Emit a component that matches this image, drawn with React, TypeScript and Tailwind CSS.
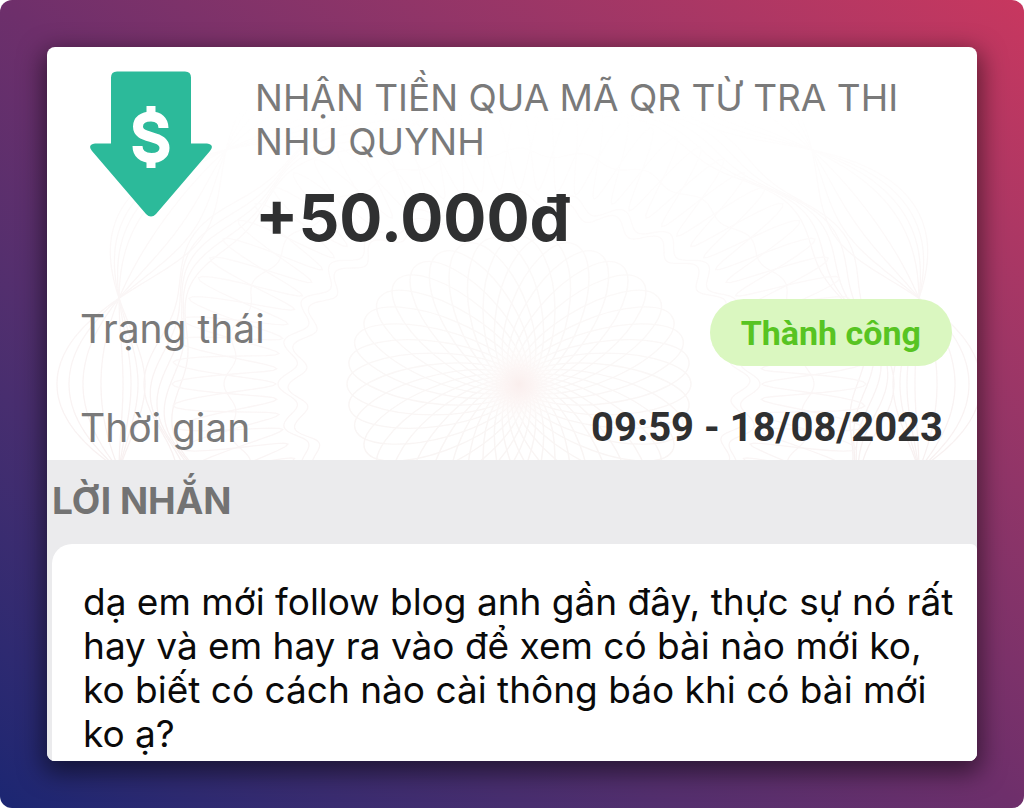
const CENTER_X = 472;
const CENTER_Y = 337;

type Lobes = { radius: number; amplitude: number; lobes: number; phase: number };

/** Closed wavy ring drawn in polar coordinates around the ornament's centre. */
function ringPath({ radius, amplitude, lobes, phase }: Lobes): string {
  const steps = 720;
  const points: string[] = [];
  for (let i = 0; i < steps; i++) {
    const t = (i / steps) * Math.PI * 2;
    const r = radius + amplitude * Math.cos(lobes * t + phase);
    points.push(`${(CENTER_X - r * Math.cos(t)).toFixed(1)} ${(CENTER_Y - r * 0.8 * Math.sin(t)).toFixed(1)}`);
  }
  return `M${points.join("L")}Z`;
}

const petals = Array.from({ length: 40 }, (_, i) => i * 9);

const outerStrands: Lobes[] = [
  ...[48, 36, 22, 4, -18, -26, -33, -40].map((amplitude) => ({ radius: 414, amplitude, lobes: 6, phase: 0 })),
  ...[0, 1, 2, 3, 4].map((i) => ({ radius: 366 - i * 6, amplitude: 9, lobes: 12, phase: i * 0.5 })),
];

const innerStrands: Lobes[] = [
  { radius: 290, amplitude: 5, lobes: 28, phase: 0 },
  { radius: 232, amplitude: 9, lobes: 28, phase: 0 },
  { radius: 222, amplitude: 9, lobes: 28, phase: 0.5 },
  { radius: 295, amplitude: 52, lobes: 40, phase: 0 },
  { radius: 295, amplitude: 52, lobes: 40, phase: 3.14 },
];

function Guilloche() {
  return (
    <svg
      aria-hidden="true"
      className="absolute inset-0 h-full w-full"
      viewBox="0 0 930 413"
      preserveAspectRatio="xMidYMax slice"
      fill="none"
    >
      <defs>
        <linearGradient id="fade" x1="0" y1="0" x2="0" y2="1">
          <stop offset="0.15" stopColor="#fff" stopOpacity="0" />
          <stop offset="0.55" stopColor="#fff" stopOpacity="0.6" />
          <stop offset="1" stopColor="#fff" />
        </linearGradient>
        <mask id="fadeMask" maskUnits="userSpaceOnUse" x="0" y="0" width="930" height="413">
          <rect width="930" height="413" fill="url(#fade)" />
        </mask>
        <radialGradient id="glow">
          <stop offset="0" stopColor="#f9ebea" />
          <stop offset="0.35" stopColor="#fcf3f2" stopOpacity="0.8" />
          <stop offset="1" stopColor="#fff" stopOpacity="0" />
        </radialGradient>
      </defs>
      <g mask="url(#fadeMask)">
        <g
          stroke="#f9f5f4"
          strokeWidth="1.5"
          transform={`translate(${CENTER_X} ${CENTER_Y}) scale(1 0.86)`}
        >
          {petals.map((angle) => (
            <ellipse key={angle} cx="86" cy="0" rx="86" ry="36" transform={`rotate(${angle})`} />
          ))}
        </g>
        <g stroke="#f8f1f1" strokeWidth="1.3">
          {outerStrands.map((strand, i) => (
            <path key={i} d={ringPath(strand)} />
          ))}
        </g>
        <g stroke="#faf5f5" strokeWidth="1.3">
          {innerStrands.map((strand, i) => (
            <path key={i} d={ringPath(strand)} />
          ))}
        </g>
        <circle cx={CENTER_X} cy={CENTER_Y} r="46" fill="url(#glow)" />
      </g>
    </svg>
  );
}

function ReceiveIcon() {
  return (
    <svg aria-hidden="true" className="h-[146px] w-[122px] shrink-0" viewBox="0 0 122 146">
      <path
        d="M27 0.500H95Q101 0.500 101 6.500V72.500H117Q125 74 120 80L66 143Q61 148 56 143L2 80Q-3 74 5 72.500H21V6.500Q21 0.500 27 0.500Z"
        fill="#2cba9a"
      />
      <g fill="none" stroke="#fff">
        <path d="M61 35V44M61 88V97" strokeWidth="9" />
        <path
          d="M73.500 57C73.500 49.500 68.500 45.500 61 45.500C53 45.500 48 49.500 48 55.500C48 61.500 52.500 63.500 61 66C70 68.500 74.500 71 74.500 77C74.500 83.500 69 87 61.500 87C52.500 87 47.500 82.500 47.500 75"
          strokeWidth="10"
        />
      </g>
    </svg>
  );
}

export default function App() {
  return (
    <main className="min-h-screen rounded-xl bg-linear-to-tr from-[#1b2672] via-[#6e2f6b] to-[#c8375f] p-[47px] font-['Inter','Noto_Sans',sans-serif]">
      <article className="overflow-hidden rounded-lg bg-white shadow-[0_8px_24px_4px_rgba(0,0,0,0.5)]">
        <section className="relative pb-2">
          <Guilloche />
          <div className="relative">
            <header className="flex gap-[43px] pt-6 pl-[43px]">
              <ReceiveIcon />
              <div className="pt-[5px]">
                <h1 className="max-w-[660px] text-[37px] leading-[44px] font-normal text-[#7a7a7a]">
                  NHẬN TIỀN QUA MÃ QR TỪ TRA THI NHU QUYNH
                </h1>
                <p className="mt-4 text-[64px] leading-[76px] font-bold text-[#2f3031]">+50.000đ</p>
              </div>
            </header>
            <dl className="pt-[43px] pr-[25px] pl-[33px]">
              <div className="flex items-start justify-between">
                <dt className="pt-[6px] text-[39px] leading-[48px] font-normal text-[#7a7a7a]">Trạng thái</dt>
                <dd className="rounded-full bg-[#daf7c0] px-[31px] pt-[13px] pb-[11px] font-[Roboto,sans-serif] text-[34px] leading-[43px] font-bold text-[#57c422]">
                  Thành công
                </dd>
              </div>
              <div className="mt-[38px] flex items-center justify-between pr-[9px]">
                <dt className="text-[39px] leading-[48px] font-normal text-[#7a7a7a]">Thời gian</dt>
                <dd className="font-[Roboto,sans-serif] text-[40px] leading-[48px] font-bold text-[#2f3031]">
                  <time dateTime="2023-08-18T09:59">09:59 - 18/08/2023</time>
                </dd>
              </div>
            </dl>
          </div>
        </section>
        <section className="bg-[#ebebed] pl-[5px]">
          <h2 className="pt-[17px] pb-[19px] text-[37px] leading-[48px] font-bold text-[#737373]">LỜI NHẮN</h2>
          <p className="rounded-tl-[20px] rounded-tr-md bg-white pt-9 pr-4 pb-[5px] pl-[31px] text-[37px] leading-[44px] font-normal text-[#0a0a0a]">
            dạ em mới follow blog anh gần đây, thực sự nó rất hay và em hay ra vào để xem có bài nào mới ko, ko biết có
            cách nào cài thông báo khi có bài mới ko ạ?
          </p>
        </section>
      </article>
    </main>
  );
}
